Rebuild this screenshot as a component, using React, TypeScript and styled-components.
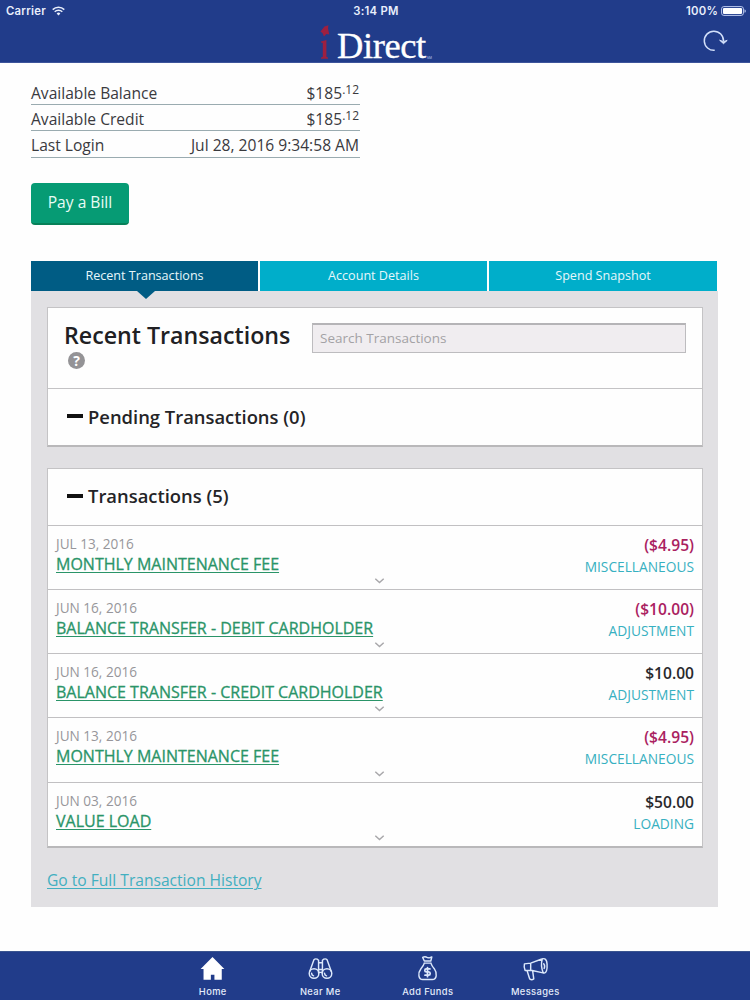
import React from "react";
import styled, { createGlobalStyle } from "styled-components";

const GlobalStyle = createGlobalStyle`
  * { box-sizing: border-box; }
  body { margin: 0; background: #fefefe; }
  body, input, button { font-family: "Open Sans", sans-serif; }
`;

const Page = styled.div`
  width: 750px;
  height: 1000px;
  display: flex;
  flex-direction: column;
  background: #fefefe;
  overflow: hidden;
`;

const Header = styled.header`
  height: 63px;
  flex: none;
  background: #213c8a;
  color: #e9effc;
  border-bottom: 1px solid #3d549b;
`;

const StatusBar = styled.div`
  height: 21px;
  display: grid;
  grid-template-columns: 1fr auto 1fr;
  align-items: center;
  padding: 1px 4px 0 6px;
  font: 600 11.3px/20px Inter, sans-serif;
  letter-spacing: 0.25px;
`;

const StatusGroup = styled.div<{ $end?: boolean }>`
  display: flex;
  align-items: center;
  gap: ${(p) => (p.$end ? 3 : 6)}px;
  justify-content: ${(p) => (p.$end ? "flex-end" : "flex-start")};
`;

const BrandBar = styled.div`
  height: 42px;
  display: grid;
  grid-template-columns: 1fr auto 1fr;
  padding: 0 22px 0 23px;
`;

const Brand = styled.div`
  display: flex;
  align-items: flex-start;
  color: #fff;
`;

const BrandName = styled.span`
  font: 36.5px/42px "Liberation Serif", serif;
  letter-spacing: -0.4px;
  margin: 4px 0 0 6px;
  -webkit-text-stroke: 0.35px #fff;
`;

const TradeMark = styled.span`
  font: 3.5px/6px "Liberation Sans", sans-serif;
  margin: 34px 0 0 1px;
  color: #b4c3ea;
`;

const Refresh = styled.button`
  justify-self: end;
  border: 0;
  padding: 0;
  margin-top: 7px;
  width: 26px;
  height: 26px;
  background: none;
`;

const Main = styled.main`
  flex: 1;
  padding: 15.5px 32px 0 31px;
`;

const Summary = styled.dl`
  margin: 0;
  width: 329px;
`;

const SummaryRow = styled.div`
  display: flex;
  justify-content: space-between;
  height: 26.4px;
  padding-right: 1px;
  border-bottom: 1px solid #9aabb0;
  font-size: 15.6px;
  line-height: 28.6px;
  color: #3a3a3e;
`;

const Term = styled.dt``;

const Value = styled.dd`
  margin: 0;
`;

const Cents = styled.sup`
  font-size: 12px;
  line-height: 0;
  vertical-align: 5px;
`;

const PayButton = styled.button`
  display: block;
  margin: 25px 0 36.8px;
  width: 98px;
  height: 42px;
  padding: 0 0 2px;
  border: 0;
  border-bottom: 2px solid #078058;
  border-radius: 4px;
  background: #069b74;
  color: #e9fbf4;
  font-size: 15.6px;
`;

const Tabs = styled.nav`
  display: grid;
  grid-template-columns: 227px 227px 228px;
  gap: 2px;
  padding-right: 1px;
`;

const Tab = styled.a<{ $active?: boolean }>`
  position: relative;
  height: 30px;
  text-align: center;
  font-size: 12.6px;
  line-height: 30px;
  color: #e6f7fb;
  background: ${(p) => (p.$active ? "#005c84" : "#00aeca")};
  &::after {
    content: "";
    display: ${(p) => (p.$active ? "block" : "none")};
    position: absolute;
    left: 106px;
    top: 30px;
    border: 9px solid transparent;
    border-top: 8px solid #005c84;
    border-bottom: 0;
  }
`;

const Panel = styled.section`
  height: 616px;
  padding: 16px 15px 0 16px;
  background: #e1e0e3;
`;

const Card = styled.div`
  border: 1px solid #c4c3c5;
  border-bottom: 2px solid #b9b8ba;
  background: #fefefe;
  margin-bottom: 21px;
`;

const CardHead = styled.div`
  height: 80px;
  display: grid;
  grid-template-columns: 264px 374px;
  align-items: start;
`;

const Title = styled.h1`
  margin: 0;
  padding: 10px 0 0 16px;
  font-size: 23.2px;
  font-weight: 600;
  line-height: 34px;
  white-space: nowrap;
  color: #202023;
`;

const Help = styled.span`
  display: block;
  margin: 0 0 0 4px;
  width: 17px;
  height: 17px;
  border-radius: 50%;
  background: #949396;
  color: #fff;
  font-size: 14px;
  font-weight: 700;
  line-height: 17px;
  text-align: center;
`;

const Search = styled.input`
  margin-top: 15px;
  height: 30px;
  border: 1px solid #bdbcbf;
  border-top: 2px solid #b5b4b7;
  border-radius: 0;
  background: #f0edf0;
  padding: 0 7px 2px;
  font-size: 13.5px;
  &::placeholder { color: #a3a2a5; opacity: 1; }
`;

const Section = styled.h2<{ $ruled?: boolean }>`
  margin: 0;
  height: ${(p) => (p.$ruled ? 56.5 : 56)}px;
  border-top: ${(p) => (p.$ruled ? "1px solid #c4c3c5" : "0")};
  display: flex;
  align-items: center;
  gap: 5px;
  padding: 0 0 2px 19px;
  font-size: 18.4px;
  font-weight: 600;
  color: #242427;
`;

const Minus = styled.span`
  width: 16px;
  height: 4px;
  background: #111;
`;

const Row = styled.div`
  position: relative;
  height: 64.3px;
  border-top: 1px solid #c1c0c2;
  display: flex;
  justify-content: space-between;
  padding: 8px 8px 0;
  &:first-of-type { height: 63.7px; }
`;

const When = styled.div`
  font-size: 13.6px;
  line-height: 20px;
  color: #97969a;
`;

const Description = styled.a`
  display: block;
  font-size: 16px;
  line-height: 21px;
  color: #2a9468;
  -webkit-text-stroke: 0.3px #2a9468;
  text-decoration: underline;
  text-decoration-thickness: 1px;
  text-underline-offset: 2px;
`;

const Figures = styled.div`
  text-align: right;
`;

const Amount = styled.div<{ $debit: boolean }>`
  font-size: 15.6px;
  font-weight: 600;
  line-height: 22px;
  color: ${(p) => (p.$debit ? "#aa2160" : "#29292c")};
`;

const Category = styled.div`
  font-size: 13.75px;
  line-height: 22px;
  color: #37b0c1;
`;

const Chevron = styled.svg`
  position: absolute;
  left: 326px;
  bottom: 4px;
`;

const HistoryLink = styled.a`
  display: inline-block;
  margin-top: -0.5px;
  font-size: 15.6px;
  line-height: 24px;
  color: #42afc0;
  text-decoration: underline;
  text-decoration-thickness: 1px;
  text-underline-offset: 2px;
`;

const TabBar = styled.footer`
  flex: none;
  height: 49px;
  display: flex;
  justify-content: center;
  background: #213c8a;
  border-top: 1px solid #3a548f;
  padding-right: 2px;
`;

const NavItem = styled.a`
  width: 107.5px;
  padding-top: 3px;
  display: flex;
  flex-direction: column;
  align-items: center;
  color: #e4ecfb;
  font: 500 9.3px/14px Inter, sans-serif;
  letter-spacing: 0.4px;
`;

const NavIcon = styled.svg`
  flex: none;
  width: 27px;
  height: 27px;
  margin-bottom: 3px;
`;

const stroke = {
  fill: "none",
  stroke: "#dce8fb",
  strokeWidth: 1.5,
  strokeLinecap: "round" as const,
  strokeLinejoin: "round" as const,
};

const transactions = [
  { date: "JUL 13, 2016", text: "MONTHLY MAINTENANCE FEE", amount: "($4.95)", category: "MISCELLANEOUS" },
  { date: "JUN 16, 2016", text: "BALANCE TRANSFER - DEBIT CARDHOLDER", amount: "($10.00)", category: "ADJUSTMENT" },
  { date: "JUN 16, 2016", text: "BALANCE TRANSFER - CREDIT CARDHOLDER", amount: "$10.00", category: "ADJUSTMENT" },
  { date: "JUN 13, 2016", text: "MONTHLY MAINTENANCE FEE", amount: "($4.95)", category: "MISCELLANEOUS" },
  { date: "JUN 03, 2016", text: "VALUE LOAD", amount: "$50.00", category: "LOADING" },
];

export default function App() {
  return (
    <Page>
      <GlobalStyle />
      <Header>
        <StatusBar>
          <StatusGroup>
            Carrier
            <svg width="13" height="10" viewBox="0 0 13 10" fill="none" stroke="#e9effc" strokeWidth="1.5">
              <path d="M.7 3.6a8.4 8.4 0 0 1 11.6 0M2.7 5.8a5.5 5.5 0 0 1 7.6 0" />
              <path d="M6.5 9.5 4.6 7.5a2.8 2.8 0 0 1 3.8 0z" fill="#e9effc" stroke="none" />
            </svg>
          </StatusGroup>
          <span>3:14 PM</span>
          <StatusGroup $end>
            100%
            <svg width="25" height="10" viewBox="0 0 25 10">
              <rect x=".6" y=".6" width="21.8" height="8.8" rx="2.2" fill="none" stroke="#bccaf0" />
              <rect x="2" y="2" width="19" height="6" rx="1" fill="#fff" />
              <path d="M23.5 3.2q1.3.4 1.3 1.8t-1.3 1.8z" fill="#bccaf0" />
            </svg>
          </StatusGroup>
        </StatusBar>
        <BrandBar>
          <span />
          <Brand>
            <svg width="12" height="40" viewBox="0 0 12 40" fill="#9d2040">
              <path d="M1.5 10.5 5.5 5.5 9.4 4.2 9 7.5 10.3 13.5 7.4 13 5 15.5 3.6 12.2z" />
              <path d="M2 20.5 7.4 19v16.8l1.6.6v1.4H2v-1.4l1.8-.6V22L2 21.6z" />
            </svg>
            <BrandName>Direct</BrandName>
            <TradeMark>SM</TradeMark>
          </Brand>
          <Refresh aria-label="Refresh">
            <svg width="26" height="26" viewBox="0 0 26 26" fill="none" stroke="#d3e0fa" strokeWidth="1.5">
              <path d="M12.7 22.3A9.6 9.6 0 1 1 21.5 13" />
              <path d="M17.6 12.2 21.5 15.7 25.2 12.4 21.4 13.6z" fill="#d3e0fa" strokeWidth="1" />
            </svg>
          </Refresh>
        </BrandBar>
      </Header>
      <Main>
        <Summary>
          <SummaryRow>
            <Term>Available Balance</Term>
            <Value>$185<Cents>.12</Cents></Value>
          </SummaryRow>
          <SummaryRow>
            <Term>Available Credit</Term>
            <Value>$185<Cents>.12</Cents></Value>
          </SummaryRow>
          <SummaryRow>
            <Term>Last Login</Term>
            <Value>Jul 28, 2016 9:34:58 AM</Value>
          </SummaryRow>
        </Summary>
        <PayButton>Pay a Bill</PayButton>
        <Tabs>
          <Tab $active>Recent Transactions</Tab>
          <Tab>Account Details</Tab>
          <Tab>Spend Snapshot</Tab>
        </Tabs>
        <Panel>
          <Card>
            <CardHead>
              <Title>
                Recent Transactions
                <Help>?</Help>
              </Title>
              <Search placeholder="Search Transactions" />
            </CardHead>
            <Section $ruled><Minus />Pending Transactions (0)</Section>
          </Card>
          <Card>
            <Section><Minus />Transactions (5)</Section>
            {transactions.map((t, i) => (
              <Row key={i}>
                <div>
                  <When>{t.date}</When>
                  <Description>{t.text}</Description>
                </div>
                <Figures>
                  <Amount $debit={t.amount.startsWith("(")}>{t.amount}</Amount>
                  <Category>{t.category}</Category>
                </Figures>
                <Chevron width="11" height="8" viewBox="0 0 11 8" fill="none" stroke="#a9a8ab" strokeWidth="1.5">
                  <path d="M1.3 1.8 5.5 5.6 9.7 1.8" />
                </Chevron>
              </Row>
            ))}
          </Card>
          <HistoryLink>Go to Full Transaction History</HistoryLink>
        </Panel>
      </Main>
      <TabBar>
        <NavItem>
          <NavIcon viewBox="0 0 28 28">
            <path d="M14 2 26.3 14.6H23.6V25.7H16V20.5H12.3V25.7H4.7V14.6H1.7z" fill="#fff" />
          </NavIcon>
          Home
        </NavItem>
        <NavItem>
          <NavIcon viewBox="0 0 28 28" {...stroke}>
            <circle cx="7.3" cy="19.2" r="5" />
            <circle cx="20.7" cy="19.2" r="5" />
            <path d="M2.8 17 7.2 5Q8.5 3.5 10.5 4.3L12 5.5V19M25.2 17 20.8 5Q19.5 3.5 17.5 4.3L16 5.5V19M12 8h4M12 15h4M12 18h4" />
            <path d="M4.8 19a3 3 0 0 0 2 2.6M18.2 19a3 3 0 0 0 2 2.6" />
          </NavIcon>
          Near Me
        </NavItem>
        <NavItem>
          <NavIcon viewBox="0 0 28 28" {...stroke}>
            <path d="M10.7 6.2 9 2.5q2.5-1.5 4.5 0 2.7 1.2 5-.5L17.4 6.2zM10.5 8.4h7.2M10.7 8.4Q10 11 7.2 14.2C3.5 19 4.7 25.5 9 25.5H19c4.5 0 5.5-6.5 2-11.3Q18.3 11 17.5 8.4" />
            <path d="M16.5 14.5h-3.7q-1.6 0-1.6 1.5t1.6 1.5h2.4q1.6 0 1.6 1.7t-1.6 1.7h-3.8M14 13v9.5" strokeWidth="1.8" />
          </NavIcon>
          Add Funds
        </NavItem>
        <NavItem>
          <NavIcon viewBox="0 0 28 28" {...stroke}>
            <path d="M2.5 9.2 9 8.4 20.5 4.2Q25.5 2.2 26 9.5 26.5 18.3 23 18.8L9.5 15.8 3.2 16Q1.7 13 2.5 9.2zM9 8.4v7.4M21 4.2q-2 7 1 14.4M5.2 16 8 24.8q2 1.5 4.2 0L11 16.2M22.5 9q1.7 2 .5 5" />
          </NavIcon>
          Messages
        </NavItem>
      </TabBar>
    </Page>
  );
}
